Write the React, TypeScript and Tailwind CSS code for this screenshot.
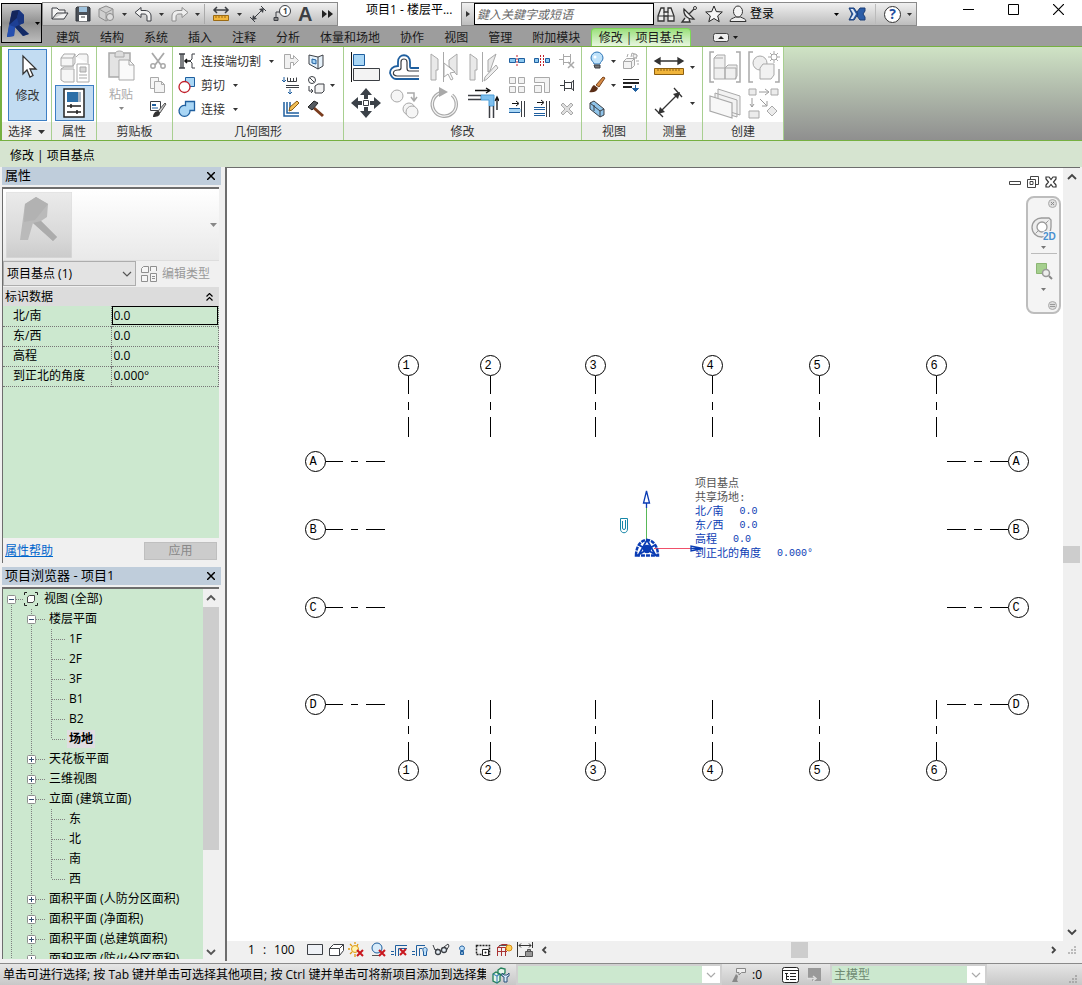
import { type ReactNode } from "react";
import clsx from "clsx";

const G = "#a9a9a9"; // disabled strokes
const D = "#3c3f44"; // dark strokes
const B = "#1f5f9f"; // blue strokes
const L = "#a9d6f5"; // light blue fills

const small: Record<string, ReactNode> = {
  open: <><path d="M3 15V4h5l2 2h6v3M3 15h12l4-6H8z" fill="#f4f4f4" stroke={D} /></>,
  save: <><path d="M4 3h12l1 1v13H3V4z" fill="#4b5058" stroke="#33373d" /><path d="M6 3h8v5H6z" fill="#9fc3de" /><path d="M6 11h8v6H6z" fill="#fff" /><path d="M8 13h4" stroke={D} /></>,
  sync: <><path d="m10 2 7 3v8l-7 4-7-4V5z" fill="#cfcfcf" stroke="#8b8b8b" /><path d="m3 5 7 4 7-4M10 9v8" fill="none" stroke="#999" /><circle cx="14" cy="13" r="3.500" fill="#ddd" stroke="#888" /></>,
  undo: <path d="M2 8.500l6-5v3h4c4 0 6 3 6 5.500V17h-4v-4c0-2-1-3-3-3H8v3.500z" fill="#f2f2f2" stroke={D} />,
  redo: <path d="M18 8.500l-6-5v3H8c-4 0-6 3-6 5.500V17h4v-4c0-2 1-3 3-3h3v3.500z" fill="#eee" stroke="#8e8e8e" />,
  measure: <><path d="M3 6h14M6 3 3 6l3 3M14 3l3 3-3 3" fill="none" stroke={D} strokeWidth="1.500" /><path d="M2.500 11.500h15v5h-15z" fill="#f2b63c" stroke="#9b6a13" /><path d="M5 12v2m3-2v2m3-2v2m3-2v2" stroke="#9b6a13" /></>,
  dim: <><path d="m5 15 10-10M2 13l5 5M13 2l5 5" fill="none" stroke={D} /><path d="m4 16 1-5 4 4zM16 4l-1 5-4-4z" fill={D} /></>,
  tag: <><circle cx="13" cy="7" r="5.500" fill="#fff" stroke={D} /><path d="M8 8H4v6" fill="none" stroke={D} /><path d="M2 13.500h4v3H2z" fill="#888" stroke={D} /><text x="11" y="10" fontSize="8" fontWeight="700" fill={D}>1</text></>,
  more: <path d="m5 6 5 4-5 4zM11 6l5 4-5 4z" fill="#222" />,
  binoculars: <><path d="M2 12 5 4h3v4h4V4h3l3 8v5h-6v-5H8v5H2z" fill="#eee" stroke="#333" strokeWidth="1.300" /><path d="M2 12h6m4 0h6M8 8v4m4-4v4" stroke="#333" /></>,
  dish: <><path d="M4 5c-1 6 4 11 10 10zM9 10l6-6M5 14l-3 4h8l-1-3" fill="#eee" stroke="#333" strokeWidth="1.300" /><circle cx="15" cy="4" r="1.500" fill="#fff" stroke="#333" /></>,
  star: <path d="m10 2 2.300 5.600 6 .4-4.600 3.900 1.500 5.800L10 14.500l-5.200 3.200 1.500-5.800L1.700 8l6-.4z" fill="#f6f6f6" stroke="#222" />,
  user: <><path d="M2 17.500c0-3 3-3 5.500-4.500h5c2.500 1.500 5.500 1.500 5.500 4.500z" fill="#eee" stroke="#333" /><ellipse cx="10" cy="7.500" rx="4.500" ry="5.500" fill="#f4f4f4" stroke="#333" /></>,
  exchange: <><path d="M10 8l3-4h5v3l-2 3 2 3v3h-5l-3-4-1-2z" fill="#2b5da8" stroke="#1d3f77" /><path d="M2 4h5l4 6-4 6H2l3-6z" fill="#2b5da8" stroke="#1d3f77" /><path d="M3.500 5H6l3 5-3 5H3.500l3-5z" fill="#dfe8f4" /></>,
  cope: <><path d="M2 3h6M2 17h6M4 3v14M6 3v14" fill="none" stroke={D} strokeWidth="1.300" /><path d="M18 3h-3v5l-2 2 2 2v5h3" fill="none" stroke={D} /><path d="M13 10H8M10 8l-2 2 2 2" fill="none" stroke="#111" strokeWidth="1.500" /></>,
  cut: <><path d="M8.500 2.500h9v9h-9z" fill={L} stroke={B} /><circle cx="7.500" cy="12" r="5.500" fill="#fff" stroke="#c0202b" strokeWidth="1.300" /></>,
  join: <><path d="M8.500 2.500h9v9H13a5.500 5.500 0 1 1-4.500-5z" fill={L} stroke={B} strokeWidth="1.300" /></>,
  joinRoof: <path d="M3.500 3.500h6v4h3v-3l5 5-5 5v-3h-3v6h-6z" fill="#f1f1f1" stroke={G} />,
  wallJoin: <><path d="M3 4l9 2 5-2v11l-5 3-9-5z" fill="#e6f2fb" stroke={D} /><path d="M12 6v12" stroke={D} /><path d="M6 8l4 1v4l-4-1z" fill={L} stroke={B} /></>,
  beam: <><path d="M3 2v5M1 5l2 2 2-2M9 14v5M7 17l2 2 2-2" fill="none" stroke={B} /><path d="M6.500 2.500v4h9v-4M9.500 3v3m3-3v3" fill="none" stroke={D} /><path d="M5 10.500h13M5 12.500h13" fill="none" stroke={D} /></>,
  paint: <><circle cx="6" cy="5" r="3.500" fill="#fff" stroke={D} /><path d="M4 3l4 4M3 11v5h4M5 14l2 2-2 2" fill="none" stroke={D} /><path d="M9 11l3-2h6v7l-2 2H9z" fill="#f3f3f3" stroke={D} /></>,
  split: <><path d="M3 3v14h15M6 3v11h12M9 3v8" fill="none" stroke={B} strokeWidth="1.500" /><path d="m8 12 1-4 7-6 2 2-7 7z" fill="#f3c056" stroke="#8a5c12" /></>,
  hammer: <><path d="M8 9l9 8" stroke="#7a3c1e" strokeWidth="3" /><path d="M2 8 8 2l4 2-6 7z" fill="#555a60" stroke="#222" /></>,
  scissors: <><path d="M4 2l9 12M16 2 7 14" stroke={G} strokeWidth="1.800" /><circle cx="5" cy="15" r="2.200" fill="none" stroke={G} strokeWidth="1.500" /><circle cx="15" cy="15" r="2.200" fill="none" stroke={G} strokeWidth="1.500" /></>,
  copy: <><path d="M2.500 2.500h8v11h-8z" fill="#f6f6f6" stroke={G} /><path d="M6.500 6.500h7l3 3v8h-10z" fill="#f3f3f3" stroke={G} /><path d="M13.500 6.500v3h3" fill="none" stroke={G} /></>,
  match: <><path d="M2.500 2.500h10v9h-10z" fill="#fff" stroke={D} /><path d="M4 5h4v2H4z" fill={B} /><path d="M4 9h6" stroke={B} /><path d="m10 12 7-8 1 1-6 9z" fill="#ccc" stroke="#555" /><path d="M5 18c0-3 2-6 5-6l2 2c0 3-3 4-7 4z" fill="#333" /></>,
  splitEl: <><path d="M2.500 7.500h6v4h-6zM11.500 7.500h6v4h-6z" fill="#8cc8f0" stroke={B} /><path d="M10 4v12" stroke="#c0202b" strokeDasharray="2 1" /></>,
  splitGap: <><path d="M2.500 7.500h4v4h-4zM13.500 7.500h4v4h-4z" fill="#8cc8f0" stroke={B} /><path d="M8.500 4v12M11.500 4v12" stroke="#c0202b" strokeDasharray="2 1" /></>,
  unpin: <><path d="M2 8.500h4M6.500 3v11M6.500 5.500h7v6h-7M13.500 3v7" fill="none" stroke={G} /><path d="m11 11 6 6m0-6-6 6" stroke={G} strokeWidth="1.500" /></>,
  array: <path d="M2.500 2.500h6v6h-6zM11.500 2.500h6v6h-6zM2.500 11.500h6v6h-6zM11.500 11.500h6v6h-6z" fill="#f3f3f3" stroke={G} />,
  scale: <><path d="M2.500 2.500h15v15h-5v-10h-10z" fill="#f3f3f3" stroke={G} /><path d="M2.500 10.500h7v7h-7z" fill="#f3f3f3" stroke={G} /></>,
  pin: <path d="M3 10.500h4M7.500 5v11M7.500 7.500h7v6h-7M16.500 5v11M14 7.500l2-1M14 13.500l2 1" fill="none" stroke={D} />,
  trim1: <><path d="M5 4.500h6M9 2l3 2.500L9 7" fill="none" stroke="#111" /><path d="M2 10h12v3H2z" fill={L} /><path d="M2 9.500h11M2 13.500h11" stroke={B} /><path d="M14.500 2v16M17.500 2v16" stroke={D} /></>,
  trim2: <><path d="M5 3.500h6M9 1l3 2.500L9 6" fill="none" stroke="#111" /><path d="M2 8.500h11M2 10.500h11M2 14.500h11M2 16.500h11" stroke={B} /><path d="M14.500 2v16M17.500 2v16" stroke={D} /></>,
  del: <path d="m4 6 2-2 4 4 4-4 2 2-4 4 4 4-2 2-4-4-4 4-2-2 4-4z" fill="#dedede" stroke={G} />,
  bulb: <><path d="M7 13c0-2-3-3-3-6a6 6 0 0 1 12 0c0 3-3 4-3 6z" fill="#bfe2fa" stroke="#2d74b5" /><path d="M7 14h6v3H8z" fill="#777" stroke={D} /><circle cx="8" cy="6" r="1.500" fill="#fff" /></>,
  explode: <><path d="M2.500 10.500l3-3h8v7l-3 3h-8zM13.500 7.500l-3 3h-8M10.500 10.500v7" fill="#f3f3f3" stroke={G} /><path d="M10 6l1-4 5 2-1 4M6 6l1-3M15 10h3M16 13h2" fill="none" stroke={G} /><circle cx="14" cy="5" r="2" fill="#eee" stroke={G} /></>,
  brush: <><path d="m9 10 7-8 2 1-6 9z" fill="#d88b45" stroke="#7a441b" /><path d="M2 17c2-1 2-5 5-7l4 3c-1 4-5 5-9 4z" fill="#5a2d16" /></>,
  linework: <><path d="M2 4.500h16" stroke="#222" /><path d="M2 8h16M2 12h9" stroke="#222" strokeWidth="2" /><path d="M14.500 10v5M11.500 13.500l3 3 3-3z" fill={B} stroke={B} /></>,
  box3d: <><path d="M3 4l4-2 10 8v6l-4 2L3 10z" fill="#8fc4ea" stroke={D} /><path d="M3 4l10 8 4-2M13 12v6M7 6v6" fill="none" stroke={D} /></>,
};

const big: Record<string, ReactNode> = {
  cursor: <path d="M11 6v18l4-4 3 7 3-1.500-3-6.500h6z" fill="#fff" stroke="#333" strokeWidth="1.300" />,
  typeProps: <><path d="M3 7l3-4h11v9l-2 3H3zM3 18h13v13H6l-3-2zM18 6l3-3h8l1 2v7M3 7h12v8M15 7l2-4M3 18l3-2h10" fill="#f6f6f6" stroke={G} /><path d="M19 13h12v18H19z" fill="#fff" stroke={G} /><path d="M22 16h6v5h-6z" fill="#d6d6d6" stroke={G} /><path d="M21 24h8m-8 3h8" stroke={G} /></>,
  props: <><path d="M6 2h20v28H6z" fill="#fff" stroke="#222" strokeWidth="1.500" /><path d="M9 5h11v10H9z" fill="#2c6fa8" /><path d="M20 5h3v10h-3z" fill="#a3b3c2" /><path d="M9 19h14M9 25h14M13 17v4M19 23v4" stroke="#222" strokeWidth="1.500" /></>,
  paste: <><path d="M4 4h21v24H4z" fill="#e3e3e3" stroke={G} strokeWidth="1.500" /><path d="M10 5c0-4 9-4 9 0v3h-9z" fill="#ddd" stroke={G} /><path d="M14 11h10l5 5v15H14z" fill="#fafafa" stroke={G} /><path d="M24 11v5h5" fill="none" stroke={G} /></>,
  align: <><path d="M1.500 1v30" stroke="#111" /><path d="M3.500 3.500h11v11h-11z" fill={L} stroke={B} /><path d="M3.500 17.500h26v12h-26z" fill="#f3f3f3" stroke={D} /></>,
  offset: <><path d="M30 17h-8c-1 0-1-1-1-2v-4c0-9-12-9-12 0v4C3 15 1 19 1 22c1 3 3 6 6 6h23" fill="none" stroke={B} strokeWidth="1.800" /><path d="M30 20H20c-2 0-2-1-2-3v-6c0-4-6-4-6 0v6c0 2-1 2-3 2-6 0-6 6-1 6h22" fill="none" stroke={D} strokeWidth="1.200" /></>,
  mirrorPick: <><path d="M3 3l7 5v11H8v10H3zM29 3l-8 6v6l8 9z" fill="#e9e9e9" stroke={G} /><path d="M15.500 1v30" stroke={G} /><path d="M16 12v14l4-3 3 6 2-1-3-6 5-1z" fill="#fff" stroke={G} /></>,
  mirrorDraw: <><path d="M3 3l7 5v11H8v10H3zM29 3l-8 6v12l2-1z" fill="#e9e9e9" stroke={G} /><path d="M15.500 1v30" stroke={G} /><path d="m17 30 1-4 11-12 2 3-11 11z" fill="#eee" stroke={G} /></>,
  move: <><path d="m16 1 6 7h-4v4h-4V8h-4zM16 31l-6-7h4v-4h4v4h4zM1 16l7-6v4h4v4H8v4zM31 16l-7 6v-4h-4v-4h4v-4z" fill="#3b4148" /><path d="M13.500 13.500h5v5h-5z" fill="#fff" stroke={D} /></>,
  copyBig: <><circle cx="8" cy="9" r="6" fill="#f5f5f5" stroke={G} /><circle cx="20" cy="22" r="6" fill="#f5f5f5" stroke={G} /><circle cx="23" cy="25" r="6" fill="#f5f5f5" stroke={G} /><path d="M18 6h7v7M22 10l3 4 3-4" fill="none" stroke={G} strokeWidth="1.500" /></>,
  rotate: <><path d="M12 6a12 12 0 1 0 12 2" fill="none" stroke={G} strokeWidth="3.500" /><path d="M12 6a12 12 0 1 0 12 2" fill="none" stroke="#f5f5f5" strokeWidth="1.200" /><path d="M11 0v10l9-5z" fill={G} /></>,
  trim: <><path d="M8 3.500h14M19 1l4 2.500L19 6M30 23V11M28 14l2-4 2 4" fill="none" stroke="#111" strokeWidth="1.300" /><path d="M14 8h13v11h-5v-6h-8z" fill="#7fc0ee" stroke="#4a9bd6" /><path d="M1 8.500h13M1 12.500h13M22.500 19v12M26.500 19v12" stroke={D} strokeWidth="1.500" /></>,
  ruler: <><path d="M3 10h26M7 7l-5 3 5 3zM25 7l5 3-5 3z" fill="#333" stroke="#333" strokeWidth="1.300" /><path d="M1.500 17.500h29v6h-29z" fill="#f0b43a" stroke="#8c5e10" /><path d="M5 18v2m3-2v2m3-2v2m3-2v2m3-2v2m3-2v2m3-2v2m3-2v2" stroke="#8c5e10" /></>,
  dimBig: <><path d="m6 26 20-20M2 22l8 8M21 1l8 9" stroke="#333" strokeWidth="1.300" /><path d="m5 27 2-7 5 5zM27 5l-2 7-5-5z" fill="#333" /></>,
  group: <><path d="M5 1H1v30h4M27 1h4v30h-4" fill="none" stroke={G} strokeWidth="1.500" /><path d="M5 17h11v11H5zM16 17h11v11H16zM5 17V7l3-3h8v13M16 17l3-3h9v11l-2 3M5 7h9" fill="#efefef" stroke={G} /></>,
  similar: <><path d="M5 1H1v30h4M27 31h4V18" fill="none" stroke={G} strokeWidth="1.500" /><circle cx="12" cy="12" r="7" fill="#efefef" stroke={G} /><path d="M12 17l3-4h11v11l-3 4H12z" fill="#f2f2f2" stroke={G} /><circle cx="26" cy="6" r="3" fill="#fff" stroke={G} /><path d="M26 0v3m0 6v3M20 6h3m6 0h3M22 2l2 2m4 4 2 2m0-8-2 2m-4 4-2 2" stroke={G} /></>,
  parts: <><path d="M9 2l22 7v19l-22-7zM6 6l22 7v17L6 23z" fill="#f2f2f2" stroke={G} /><path d="M1 9l22 7v15L1 24z" fill="#f7f7f7" stroke={G} strokeWidth="1.200" /></>,
  assembly: <><path d="M1 2h7v6H1zM23 2h7v6h-7zM1 24h10v7H1zM24 19l5 5-5 5-5-5z" fill="#ececec" stroke={G} /><path d="M11 5h9M17 2l4 3-4 3M4 11v9M2 17l2 3 2-3M12 12l7 7M19 14v5h-5" fill="none" stroke="#9a9a9a" /></>,
};

// 18px icons of the view control bar
const view: Record<string, ReactNode> = {
  detail: <path d="M1.500 3.500h15v10h-15z" fill="#eef1f6" stroke={D} />,
  style: <path d="M2.500 7.500l4-4h10v6l-4 5h-10zM16.500 3.500l-4 4h-10M12.500 7.500v7" fill="#fff" stroke={D} />,
  sun: <><circle cx="7" cy="8" r="3.500" fill="#fff3b0" stroke="#e09a10" /><path d="M7 1v2m0 10v3M0 8h2M2 3l2 2m6-2-1 2M2 13l2-2" stroke="#e09a10" strokeWidth="1.300" /><path d="m9 9 6 6m0-6-6 6" stroke="#c8171e" strokeWidth="2" /></>,
  shadow: <><circle cx="8" cy="7" r="5" fill="#d8ecfa" stroke={B} /><path d="M3 14.500h7" stroke="#555" /><path d="m10 9 6 6m0-6-6 6" stroke="#c8171e" strokeWidth="2" /></>,
  crop: <><path d="M5.500 15V4.500H17M8.500 15V7.500H17M1 10.500h3M1 13.500h3" fill="none" stroke={B} /><path d="m10 8 6 6m0-6-6 6" stroke="#c8171e" strokeWidth="2" /></>,
  cropShow: <><path d="M5.500 15V4.500H14M8.500 15V7.500h3M1 10.500h3M1 13.500h3" fill="none" stroke={B} /><path d="M12.500 11c-3-6 6-6 3 0v3.500h-3z" fill="#bfe0fa" stroke={B} /></>,
  glasses: <><path d="M1 4l2 5 3-1M12 6l4-3 1 2-3 5" fill="none" stroke={D} /><circle cx="6" cy="11" r="2.500" fill="#e5eef6" stroke={D} strokeWidth="1.300" /><circle cx="12" cy="9" r="2.500" fill="#e5eef6" stroke={D} strokeWidth="1.300" /></>,
  reveal: <><path d="M7.500 9.500c-4-6 7-6 3 0z" fill="#bfe0fa" stroke={B} /><path d="M7.500 10.500h3v3h-3z" fill="#7fa8cc" stroke={B} /></>,
  temp: <><path d="M2.500 4.500h13v9h-13z" fill="none" stroke="#222" strokeWidth="1.500" strokeDasharray="2 1" /><path d="M8.500 8.500h6v6h-6z" fill="#fff" stroke="#222" /><circle cx="11.500" cy="11.500" r="1" fill="#222" /></>,
  analytic: <><path d="M2.500 15V6.500l4-3h6M6.500 15V7M2 10.500h10M10.500 15V6M2 6.500h8" fill="none" stroke="#a33" /><path d="M4 4.500h8v3" fill="none" stroke="#555" /><circle cx="14" cy="7" r="3" fill="#ffd257" stroke="#d98b12" /></>,
  constraint: <><path d="M1.500 1v15M16.500 1v6M3 4.500h12M5 2.500l-2 2 2 2m8-4 2 2-2 2M3 15.500h6" fill="none" stroke="#333" /><path d="M9.500 10.500h7v5h-7zM11.500 10.500v-2h3v2" fill="#999" stroke="#555" /></>,
};

function Icon({ set, name, size }: { set: Record<string, ReactNode>; name: string; size: number }) {
  return (
    <svg width={size} height={size} viewBox={`0 0 ${size} ${size}`} className="shrink-0" aria-hidden="true">
      {set[name]}
    </svg>
  );
}

const Small = ({ name }: { name: string }) => <Icon set={small} name={name} size={20} />;

function Caret({ className }: { className?: string }) {
  return (
    <svg width="5" height="3" viewBox="0 0 5 3" className={clsx("shrink-0", className)} aria-hidden="true">
      <path d="M0 0h5L2.500 3z" fill="currentColor" />
    </svg>
  );
}

function Chevron({ dir, thin, className }: { dir: "up" | "down" | "left" | "right"; thin?: boolean; className?: string }) {
  const d = {
    up: "M1 7l4-4 4 4",
    down: "M1 3l4 4 4-4",
    left: "M7 2L4 5l3 3",
    right: "M3 2l3 3-3 3",
  }[dir];
  return (
    <svg width="10" height="10" viewBox="0 0 10 10" className={clsx("shrink-0", className)} aria-hidden="true">
      <path d={d} fill="none" stroke="currentColor" strokeWidth={thin ? 1.2 : 1.8} />
    </svg>
  );
}

function BarButton({ name, width = "w-6" }: { name: string; width?: string }) {
  return (
    <button aria-label={name} className={clsx("flex h-full items-center justify-center", width)}>
      <Small name={name} />
    </button>
  );
}

function TitleBar() {
  return (
    <div className="flex h-[26px] items-start">
      <div className="flex h-6 w-[296px] items-center self-end border border-[#8a8a8a] bg-linear-to-b from-[#f0f0f0] to-[#bdbdbd] pl-1 text-[#333]">
        <BarButton name="open" />
        <BarButton name="save" />
        <BarButton name="sync" />
        <Caret className="mx-1" />
        <BarButton name="undo" />
        <Caret className="mx-1" />
        <BarButton name="redo" />
        <Caret className="mx-1" />
        <span className="mr-1 h-5 w-px bg-[#aaa]" />
        <BarButton name="measure" />
        <Caret className="mx-1" />
        <BarButton name="dim" />
        <BarButton name="tag" />
        <button className="w-6 font-['Liberation_Sans'] text-xl font-bold leading-5 text-[#3c3f44]">A</button>
        <BarButton name="more" width="w-5" />
      </div>
      <h1 className="w-[123px] shrink-0 pl-7 text-xs leading-5">项目1 - 楼层平...</h1>
      <div className="flex h-6 w-[456px] items-center self-end border border-[#8a8a8a] bg-linear-to-b from-[#f0f0f0] to-[#bdbdbd] text-[#333]">
        <button aria-label="收拢" className="flex w-3 justify-center">
          <svg width="4" height="6" viewBox="0 0 4 6"><path d="M0 0l4 3-4 3z" fill="#333" /></svg>
        </button>
        <input
          aria-label="搜索"
          placeholder="鍵入关鍵字或短语"
          className="h-[22px] w-[180px] border border-black bg-white px-0.5 text-xs italic outline-none placeholder:text-[#666]"
        />
        <BarButton name="binoculars" />
        <BarButton name="dish" />
        <BarButton name="star" />
        <BarButton name="user" />
        <button className="flex flex-1 items-center justify-between text-xs text-black">
          登录 <Caret />
        </button>
        <BarButton name="exchange" width="w-9" />
        <span className="h-5 w-px bg-[#bbb]" />
        <button aria-label="帮助" className="ml-2 flex h-[17px] w-[17px] items-center justify-center rounded-full border border-[#333] bg-white text-sm font-bold leading-4 text-[#1f4f9f]">
          ?
        </button>
        <Caret className="ml-1.5 mr-1" />
      </div>
      <div className="flex flex-1 items-center justify-end gap-[34px] pr-[18px] pt-1">
        <button aria-label="最小化"><svg width="11" height="11"><path d="M0 5.500h11" stroke="#000" /></svg></button>
        <button aria-label="最大化"><svg width="11" height="11"><path d="M.5.5h10v10H.5z" fill="none" stroke="#000" /></svg></button>
        <button aria-label="关闭"><svg width="11" height="11"><path d="m0 0 11 11M11 0 0 11" stroke="#000" strokeWidth="1.200" /></svg></button>
      </div>
    </div>
  );
}

const tabs = ["建筑", "结构", "系统", "插入", "注释", "分析", "体量和场地", "协作", "视图", "管理", "附加模块"];

function Header() {
  return (
    <header className="flex bg-[linear-gradient(#fff_26px,#9d9d9d_26px)]">
      <button
        aria-label="应用程序菜单"
        className="ml-px mt-[3px] flex h-10 w-[41px] shrink-0 items-center border border-black bg-linear-to-b from-[#c9c9c9] via-[#8f8f8f] to-[#bcbcbc] pl-1"
      >
        <svg width="25" height="29" viewBox="0 0 25 29">
          <path d="M6 2l7-1 5 5v8l-5 2 10 9-6 2-8-9-1 9-7 1z" fill="#1d3f94" />
          <path d="M6 2l7-1-2 8-8 7z" fill="#14265c" />
          <path d="M13 1l5 5v8l-5 2-2-7z" fill="#1a3680" />
          <path d="M9 18l4-2 10 9-6 2z" fill="#132a66" />
          <path d="M3 16l6 2-1 9-7 1z" fill="#2650b0" />
        </svg>
        <Caret className="ml-1" />
      </button>
      <div className="min-w-0 flex-1">
        <TitleBar />
        <nav className="flex h-5 items-end gap-5 pl-[14px] text-xs leading-[17px] text-[#1a1a1a]">
          {tabs.map((t) => (
            <button key={t} className="shrink-0">{t}</button>
          ))}
          <button className="-ml-[9px] h-[18px] w-[100px] shrink-0 rounded-t-sm border border-b-0 border-[#7ed957] bg-linear-to-b from-[#9be07b] to-[#e8f5e0]">
            修改 | 项目基点
          </button>
          <button aria-label="最小化功能区" className="ml-0.5 flex items-center gap-1 pb-1">
            <svg width="16" height="9" viewBox="0 0 16 9">
              <rect x=".5" y=".5" width="15" height="8" rx="2" fill="#eee" stroke="#444" />
              <path d="M8 3l3 3H5z" fill="#222" />
            </svg>
            <Caret />
          </button>
        </nav>
      </div>
    </header>
  );
}

interface PanelProps {
  label: string;
  width: string;
  caret?: boolean;
  children: ReactNode;
}

function Panel({ label, width, caret, children }: PanelProps) {
  return (
    <section className={clsx("flex shrink-0 flex-col border-r border-[#a8cf90] bg-white", width)}>
      <div className="flex h-[75px] pt-0.5">{children}</div>
      <div className="flex flex-1 items-center justify-center gap-1.5 bg-[#eee] pt-px text-xs leading-4">
        {label}
        {caret && (
          <svg width="7" height="4" viewBox="0 0 7 4"><path d="M0 0h7L3.500 4z" fill="#333" /></svg>
        )}
      </div>
    </section>
  );
}

// Column of large buttons
function BigCol({ names, width = "w-[39px]" }: { names: string[]; width?: string }) {
  return (
    <div className={clsx("flex flex-col", width)}>
      {names.map((n) => (
        <button key={n} aria-label={n} className="flex h-9 items-center justify-center">
          <Icon set={big} name={n} size={32} />
        </button>
      ))}
    </div>
  );
}

// Column of three small buttons
function SmallCol({ names, width = "w-[25px]", className }: { names: string[]; width?: string; className?: string }) {
  return (
    <div className={clsx("flex flex-col", width, className)}>
      {names.map((n) => (
        <button key={n} aria-label={n} className="flex h-6 items-center justify-center">
          <Small name={n} />
        </button>
      ))}
    </div>
  );
}

function Ribbon() {
  return (
    <div className="flex h-[95px] border-y border-l-2 border-[#76b041] bg-linear-to-b from-[#cfe3c5] to-[#8f8f8f] text-[#333]">
      <Panel label="选择" width="w-[50px]" caret>
        <button className="ml-1.5 flex h-[72px] w-[39px] flex-col items-center border border-[#3d7fc4] bg-[#c2dcf2] text-xs">
          <Icon set={big} name="cursor" size={32} />
          <span className="mt-1.5">修改</span>
        </button>
      </Panel>
      <Panel label="属性" width="w-[45px]">
        <div className="flex w-full flex-col items-center">
          <button aria-label="类型属性" className="flex h-9 items-center">
            <Icon set={big} name="typeProps" size={32} />
          </button>
          <button aria-label="属性" className="flex h-9 w-[39px] items-center justify-center border border-[#3d7fc4] bg-[#c2dcf2]">
            <Icon set={big} name="props" size={32} />
          </button>
        </div>
      </Panel>
      <Panel label="剪贴板" width="w-[76px]">
        <button className="ml-2 flex w-8 flex-col items-center text-xs text-[#aaa]">
          <Icon set={big} name="paste" size={32} />
          <span className="mt-1.5">粘贴</span>
          <Caret className="mt-1 text-[#888]" />
        </button>
        <SmallCol names={["scissors", "copy", "match"]} className="ml-2" />
      </Panel>
      <Panel label="几何图形" width="w-[171px]">
        <div className="ml-1 w-[101px]">
          {[
            ["cope", "连接端切割"],
            ["cut", "剪切"],
            ["join", "连接"],
          ].map(([icon, text]) => (
            <button key={icon} className="flex h-6 items-center text-xs">
              <Small name={icon} />
              <span className="ml-1 mr-2 pt-0.5">{text}</span>
              <Caret />
            </button>
          ))}
        </div>
        <SmallCol names={["joinRoof", "beam", "split"]} />
        <SmallCol names={["wallJoin", "paint", "hammer"]} />
        <Caret className="ml-0.5 mt-[35px]" />
      </Panel>
      <Panel label="修改" width="w-[238px]">
        <BigCol names={["align", "move"]} width="ml-0.5 w-[39px]" />
        <BigCol names={["offset", "copyBig"]} />
        <BigCol names={["mirrorPick", "rotate"]} />
        <BigCol names={["mirrorDraw", "trim"]} />
        <SmallCol names={["splitEl", "array", "trim1"]} className="ml-0.5" />
        <SmallCol names={["splitGap", "scale", "trim2"]} />
        <SmallCol names={["unpin", "pin", "del"]} />
      </Panel>
      <Panel label="视图" width="w-[65px]">
        <SmallCol names={["bulb", "brush", "box3d"]} className="ml-0.5" />
        <div className="flex flex-col gap-[21px] pl-0.5 pt-[11px]">
          <Caret />
          <Caret />
        </div>
        <SmallCol names={["explode", "linework"]} className="ml-0.5" />
      </Panel>
      <Panel label="测量" width="w-[56px]">
        <BigCol names={["ruler", "dimBig"]} width="ml-0.5 w-[39px]" />
        <div className="flex flex-col gap-[33px] pl-0.5 pt-[17px]">
          <Caret />
          <Caret />
        </div>
      </Panel>
      <Panel label="创建" width="w-[81px]">
        <BigCol names={["group", "parts"]} width="ml-0.5 w-[39px]" />
        <BigCol names={["similar", "assembly"]} />
      </Panel>
    </div>
  );
}

function PaletteTitle({ children }: { children: ReactNode }) {
  return (
    <div className="flex h-[18px] shrink-0 items-center justify-between bg-[#bfcddb] pl-[3px] pr-1.5 text-[13px]">
      <h2>{children}</h2>
      <button aria-label="关闭">
        <svg width="8" height="8" viewBox="0 0 8 8"><path d="m0 0 8 8M8 0 0 8" stroke="#000" strokeWidth="1.500" /></svg>
      </button>
    </div>
  );
}

const rows = [
  { id: "north", label: "北/南", value: "0.0" },
  { id: "east", label: "东/西", value: "0.0" },
  { id: "elev", label: "高程", value: "0.0" },
  { id: "angle", label: "到正北的角度", value: "0.000°" },
];

function Properties() {
  return (
    <section className="flex h-[400px] shrink-0 flex-col">
      <PaletteTitle>属性</PaletteTitle>
      <div className="mb-1 mr-0.5 mt-0.5 flex flex-1 flex-col border-l border-t-2 border-[#6d6d6d]">
        <button aria-label="类型选择器" className="flex h-[71px] items-center justify-between bg-linear-to-b from-white to-[#e9e9e9] pl-[3px] pr-0.5 text-[#888]">
          <svg width="66" height="66" viewBox="0 0 66 66">
            <defs>
              <linearGradient id="thumb" x1="0" y1="0" x2="0" y2="1">
                <stop offset="0" stopColor="#ebebeb" />
                <stop offset="0.7" stopColor="#d8d8d8" />
                <stop offset="1" stopColor="#cbcbcb" />
              </linearGradient>
            </defs>
            <path d="M0 0h66v66H0z" fill="url(#thumb)" stroke="#ddd" />
            <path d="M19 12l11-7 12 7-1 13-6 4 16 16-4 4-20-18-5 17h-8z" fill="#bababa" />
            <path d="M19 12l11-7 12 7-13 16-11 2z" fill="#b2b2b2" />
            <path d="M27 31l8-2 16 16-4 4z" fill="#acacac" />
          </svg>
          <svg width="7" height="4" viewBox="0 0 7 4"><path d="M0 0h7L3.500 4z" fill="currentColor" /></svg>
        </button>
        <div className="flex h-[27px] items-center border-t border-[#ddd] pb-px">
          <div className="relative w-[133px]">
            <select aria-label="图元筛选" className="block h-[25px] w-full appearance-none border border-[#adadad] bg-[#e3e3e3] pl-[3px] text-xs outline-none">
              <option>项目基点 (1)</option>
            </select>
            <Chevron dir="down" thin className="pointer-events-none absolute right-1 top-2 text-[#555]" />
          </div>
          <button className="ml-1 flex items-center gap-1 text-xs text-[#999]">
            <svg width="18" height="18" viewBox="0 0 18 18">
              <path d="M1.500 3.500l2-2h5v6h-7zM1.500 10.500h6v6h-6zM10.500 6V1.500h6V6M10.500 8.500h6v8h-6z" fill="#f6f6f6" stroke="#8f8f8f" />
              <path d="M12 11.500h3M12 13.500h3" stroke="#8f8f8f" />
            </svg>
            编辑类型
          </button>
        </div>
        <div className="flex h-[19px] items-center justify-between bg-[#dcdcdc] pl-0.5 pr-1.5 text-xs">
          标识数据
          <svg width="7" height="8" viewBox="0 0 7 8"><path d="m.5 3.500 3-3 3 3M.5 7.500l3-3 3 3" fill="none" stroke="#000" strokeWidth="1.200" /></svg>
        </div>
        <div className="flex-1 bg-[#cce8cf]">
          <table className="w-full table-fixed border-collapse text-xs">
            <tbody>
              {rows.map((r, i) => (
                <tr key={r.id} className="h-5 border-b border-dotted border-[#777]">
                  <th className="w-[108px] border-r border-dotted border-[#777] p-0 pl-2.5 text-left font-normal">
                    <label htmlFor={r.id}>{r.label}</label>
                  </th>
                  <td className="border-r border-dotted border-[#777] p-0">
                    <input
                      id={r.id}
                      defaultValue={r.value}
                      className={clsx("block h-[19px] w-full border bg-transparent px-px pb-px outline-none", i === 0 ? "border-black" : "border-transparent")}
                    />
                  </td>
                </tr>
              ))}
            </tbody>
          </table>
        </div>
        <div className="flex h-[25px] items-center justify-between pl-0.5 pr-0.5 text-xs">
          <a href="#help" className="text-[#0066cc] underline">属性帮助</a>
          <button className="h-[18px] w-[73px] border border-[#bfbfbf] bg-[#ccc] leading-4 text-[#888]">应用</button>
        </div>
      </div>
    </section>
  );
}

interface Node {
  text: string;
  depth: number;
  open?: boolean;
  leaf?: boolean;
  last?: boolean;
  active?: boolean;
}

const tree: Node[] = [
  { text: "视图 (全部)", depth: 0, open: true },
  { text: "楼层平面", depth: 1, open: true },
  { text: "1F", depth: 2, leaf: true },
  { text: "2F", depth: 2, leaf: true },
  { text: "3F", depth: 2, leaf: true },
  { text: "B1", depth: 2, leaf: true },
  { text: "B2", depth: 2, leaf: true },
  { text: "场地", depth: 2, leaf: true, last: true, active: true },
  { text: "天花板平面", depth: 1 },
  { text: "三维视图", depth: 1 },
  { text: "立面 (建筑立面)", depth: 1, open: true },
  { text: "东", depth: 2, leaf: true },
  { text: "北", depth: 2, leaf: true },
  { text: "南", depth: 2, leaf: true },
  { text: "西", depth: 2, leaf: true, last: true },
  { text: "面积平面 (人防分区面积)", depth: 1 },
  { text: "面积平面 (净面积)", depth: 1 },
  { text: "面积平面 (总建筑面积)", depth: 1 },
  { text: "面积平面 (防火分区面积)", depth: 1 },
];

function TreeRow({ node }: { node: Node }) {
  const x = 8.5 + node.depth * 20;
  const dots = { stroke: "#808080", strokeDasharray: "1 1" };
  const w = node.depth * 20 + (node.depth ? 24 : 21);
  return (
    <li className="flex h-5 items-center text-xs">
      <svg width={w} height="20" className="shrink-0" aria-hidden="true">
        {Array.from({ length: node.depth }, (_, i) => (
          <path key={i} d={`M${8.5 + i * 20} 0v20`} {...dots} />
        ))}
        {node.depth > 0 && <path d={`M${x} 0v${node.last ? 10 : 20}`} {...dots} />}
        {node.depth === 0 && <path d="M8.500 10v10" {...dots} />}
        <path d={`M${x + 0.5} 10.500h14`} {...dots} />
        {!node.leaf && (
          <>
            <rect x={x - 4} y="6.500" width="8" height="8" rx="1" fill="#fff" stroke="#8f8f8f" />
            <path d={`M${x - 2.5} 10.500h5`} stroke="#33506f" />
            {!node.open && <path d={`M${x} 8v5`} stroke="#33506f" />}
          </>
        )}
      </svg>
      {node.depth === 0 && (
        <svg width="14" height="14" viewBox="0 0 14 14" className="mr-1.5 shrink-0" aria-hidden="true">
          <path d="M3 .5H.5V3M11 .5h2.500V3M3 13.500H.5V11M11 13.500h2.500V11" fill="none" stroke="#222" />
          <path d="M3.500 5l2-1.500h5v5L9 10.500H3.500z" fill="#fff" stroke="#444" />
        </svg>
      )}
      <button
        className={clsx(
          "whitespace-nowrap leading-[18px]",
          node.depth > 0 && "px-0.5",
          node.active && "bg-[#dfdde0] font-bold",
        )}
      >
        {node.text}
      </button>
    </li>
  );
}

function Browser() {
  return (
    <section className="flex min-h-0 flex-1 flex-col">
      <PaletteTitle>项目浏览器 - 项目1</PaletteTitle>
      <div className="mr-0.5 mt-0.5 flex min-h-0 flex-1 border-l border-t-2 border-[#6d6d6d]">
        <ul className="min-w-0 flex-1 overflow-hidden bg-[#cce8cf]">
          {tree.map((n) => (
            <TreeRow key={n.text} node={n} />
          ))}
        </ul>
        <div className="flex w-4 flex-col items-center bg-[#f0f0f0] text-[#555]">
          <Chevron dir="up" className="my-1" />
          <div className="h-[243px] w-full bg-[#cdcdcd]" />
          <Chevron dir="down" className="mb-0.5 mt-auto" />
        </div>
      </div>
    </section>
  );
}

const cols = [181, 263, 368, 485, 592, 709];
const lines = [293, 361, 439, 536];

function Bubble({ x, y, text }: { x: number; y: number; text: string }) {
  return (
    <g>
      <circle cx={x + 0.5} cy={y + 0.5} r="10" fill="#fff" stroke="#000" />
      <text x={x - 2} y={y + 4} textAnchor="middle" fontSize="12" fontFamily="'Liberation Mono',monospace">
        {text}
      </text>
    </g>
  );
}

function Plan() {
  return (
    <svg width="835" height="773" viewBox="0 0 835 773" className="absolute left-0 top-0">
      {cols.map((x, i) => (
        <g key={x}>
          <path d={`M${x + 0.5} 208v18m0 8v8m0 7v20M${x + 0.5} 532v19m0 7v8m0 8v18`} stroke="#000" />
          <Bubble x={x} y={197} text={String(i + 1)} />
          <Bubble x={x} y={602} text={String(i + 1)} />
        </g>
      ))}
      {lines.map((y, i) => (
        <g key={y}>
          <path d={`M98 ${y + 0.5}h18m8 0h7m8 0h19M720 ${y + 0.5}h19m8 0h8m8 0h18`} stroke="#000" />
          <Bubble x={88} y={y} text={"ABCD"[i]} />
          <Bubble x={791} y={y} text={"ABCD"[i]} />
        </g>
      ))}
      {/* project base point */}
      <path d="M419.500 373v-34" stroke="#58b858" />
      <path d="M427 380.500h37" stroke="#f0506a" />
      <g fill="none" stroke="#0a3cb4" strokeWidth="1.300">
        <path d="M419.500 323l-3 12h6zM419.500 335v5M464 378v5l12-2.500zM464 380.500h10" />
        <path d="M409 387.500c0-8 4-15.500 11-15.500s11 7.500 11 15.500z" strokeWidth="2.500" strokeDasharray="4 1" />
        <path d="M411 388l9-16 9 16M412 377l17 10M428 377l-17 10" strokeWidth="1.800" />
        <circle cx="420" cy="381" r="3.500" fill="#0a3cb4" />
      </g>
      <path d="M395.500 353v7a1.500 1.500 0 0 0 3 0v-8M393.500 360v-9.500h7V361c0 5-7 5-7 0z" fill="none" stroke="#1787a8" />
    </svg>
  );
}

const point = [
  ["北/南", "0.0"],
  ["东/西", "0.0"],
  ["高程", "0.0"],
  ["到正北的角度", "0.000°"],
];

function NavBar() {
  return (
    <div className="absolute right-0.5 top-7 flex h-[118px] w-[35px] flex-col items-center rounded-lg border-2 border-[#bdbdbd] bg-[#f4f4f4] text-[#777]">
      <button aria-label="关闭导航栏" className="self-end pr-0.5 pt-px">
        <svg width="9" height="9" viewBox="0 0 9 9"><circle cx="4.500" cy="4.500" r="4" fill="#ddd" stroke="#aaa" /><path d="m3 3 3 3m0-3L3 6" stroke="#888" /></svg>
      </button>
      <button aria-label="控制盘" className="mt-2">
        <svg width="26" height="26" viewBox="0 0 26 26">
          <path d="M11 2h7l2 2v7a9.500 9.500 0 1 1-9-9z" fill="#ededed" stroke="#9a9a9a" strokeWidth="1.300" />
          <circle cx="11" cy="11" r="5" fill="#fff" stroke="#9a9a9a" strokeWidth="1.300" />
          <path d="M7.500 14.500l-3 3M14.500 7.500l3-3" stroke="#9a9a9a" />
          <text x="12" y="24" fontSize="10" fontWeight="700" fontFamily="Liberation Sans" fill="#4a90cf" stroke="#f4f4f4" strokeWidth="2" paintOrder="stroke">2D</text>
        </svg>
      </button>
      <Caret className="mt-1" />
      <span className="my-1 h-px w-[26px] bg-[#bbb]" />
      <button aria-label="缩放" className="mt-1">
        <svg width="18" height="18" viewBox="0 0 18 18">
          <path d="M1.500 1.500h10v10h-10z" fill="#a5cf8e" stroke="#8bb573" />
          <circle cx="11" cy="11" r="3.500" fill="#eee" stroke="#999" strokeWidth="1.500" />
          <path d="m14 14 3 3" stroke="#888" strokeWidth="2" />
        </svg>
      </button>
      <Caret className="mt-2" />
      <button aria-label="选项" className="mb-0.5 mt-auto self-end pr-0.5">
        <svg width="9" height="9" viewBox="0 0 9 9"><circle cx="4.500" cy="4.500" r="4" fill="#ddd" stroke="#aaa" /><path d="M2 3.500h5M2 5.500h5" stroke="#999" /></svg>
      </button>
    </div>
  );
}

function Canvas() {
  return (
    <div className="relative min-w-0 flex-1 overflow-hidden bg-white">
      <Plan />
      <div className="absolute left-[468px] top-[309px] font-['Liberation_Mono','Noto_Sans_CJK_SC',monospace] text-[11px] leading-[14px] text-[#0a3cb4]">
        <p className="text-[#555]">项目基点</p>
        <p className="text-[#555]">共享场地:</p>
        {point.map(([k, v]) => (
          <p key={k} className="flex gap-4">
            <span>{k}</span>
            <span className="text-[10px]">{v}</span>
          </p>
        ))}
      </div>
      <div className="absolute right-1.5 top-2 flex items-center gap-1.5">
        <button aria-label="最小化视图"><svg width="12" height="12"><path d="M.5 5.500h11v3H.5z" fill="#fff" stroke="#444" /></svg></button>
        <button aria-label="还原视图"><svg width="12" height="12"><path d="M3.500 3V.5h8v8H9M.5 3.500h8v8h-8zM3 5.500h3v3H3z" fill="none" stroke="#444" /></svg></button>
        <button aria-label="关闭视图"><svg width="12" height="12" viewBox="0 0 12 12"><path d="M1 1h3l2 2.500L8 1h3v2L8.500 6 11 9v2H8L6 8.500 4 11H1V9l2.500-3L1 3z" fill="#fff" stroke="#333" strokeWidth="1.200" /></svg></button>
      </div>
      <NavBar />
    </div>
  );
}

function ViewControls() {
  return (
    <div className="flex h-5 items-center bg-[#f0f0f0] pb-0.5 text-[#444]">
      <button className="ml-[21px] flex w-[56px] gap-2 text-xs text-black">
        <span>1</span>
        <span>:</span>
        <span>100</span>
      </button>
      {Object.keys(view).map((n) => (
        <button key={n} aria-label={n} className="flex w-[21px] justify-center">
          <Icon set={view} name={n} size={18} />
        </button>
      ))}
      <Chevron dir="left" className="ml-1" />
      <div className="flex h-4 flex-1 justify-center">
        <div className="h-full w-[17px] bg-[#cdcdcd]" />
      </div>
      <Chevron dir="right" className="mr-1" />
      <div className="flex w-[17px] justify-center">
        <svg width="10" height="10" viewBox="0 0 10 10"><path d="M7 1h2v2H7zM4 4h2v2H4zM7 4h2v2H7zM1 7h2v2H1zM4 7h2v2H4zM7 7h2v2H7z" fill="#bbb" /></svg>
      </div>
    </div>
  );
}

function Combo({ label, value, width }: { label: string; value: string; width: string }) {
  return (
    <div className={clsx("relative h-[21px] border-2 border-[#d0d0d0] bg-white", width)}>
      <select aria-label={label} className="block h-[17px] w-[calc(100%-18px)] appearance-none bg-[#cce8cf] pl-0.5 text-xs leading-4 text-[#6f8a72] outline-none">
        <option>{value}</option>
      </select>
      <Chevron dir="down" thin className="pointer-events-none absolute right-1 top-1 text-[#aaa]" />
    </div>
  );
}

function StatusBar() {
  return (
    <footer className="flex h-[22px] shrink-0 items-center border-t border-[#8a8a8a] bg-linear-to-b from-[#e6e6e6] to-[#c8c8c8] text-xs">
      <p className="ml-[3px] w-[483px] shrink-0 overflow-hidden whitespace-nowrap">
        单击可进行选择; 按 Tab 键并单击可选择其他项目; 按 Ctrl 键并单击可将新项目添加到选择集
      </p>
      <button aria-label="工作集" className="mx-1.5">
        <svg width="18" height="18" viewBox="0 0 18 18">
          <path d="M6 4l3-2 4 1v4L10 9 6 8zM1 8l3-2 4 2v7l-3 2-4-2z" fill="#e6f5ea" stroke="#23805a" strokeWidth="1.300" />
          <path d="M1 8l4 2 3-2M5 10v7" fill="none" stroke="#2d74b5" />
          <path d="M10 7v3l2 1v5h3v-5l2-1V7l-2 2h-3z" fill="#d7ecfa" stroke="#2b4f78" />
        </svg>
      </button>
      <Combo label="活动工作集" value="" width="w-[206px]" />
      <button className="ml-1 flex items-center gap-1.5 px-1.5">
        <svg width="14" height="16" viewBox="0 0 14 16"><path d="M4.500 1.500h9v4h-4L7 8V5.500H4.500z" fill="#eee" stroke="#888" /><path d="M4 7l2 2-1 4 1 2H0l2-4z" fill="#888" /></svg>
        :0
      </button>
      <button aria-label="设计选项" className="ml-3.5">
        <svg width="17" height="16" viewBox="0 0 17 16"><rect x=".5" y=".5" width="16" height="15" rx="2" fill="#fff" stroke="#222" /><path d="M1 3.500h15M3 6.500h3M8 9.500h6M8 12.500h6M8 6.500h6M4.500 7v5.500H7M5 9.500h2" stroke="#222" fill="none" /></svg>
      </button>
      <button aria-label="添加到集" className="mx-2">
        <svg width="15" height="15" viewBox="0 0 15 15"><path d="M1 1h13v13H5v-3H1z" fill="#999" /><path d="M0 11.500h8M6 9l3 2.500L6 14" fill="none" stroke="#ddd" strokeWidth="1.500" /></svg>
      </button>
      <Combo label="设计选项集" value="主模型" width="w-[157px]" />
      <svg width="10" height="10" viewBox="0 0 10 10" className="ml-auto mr-1 mt-2"><path d="M7 1h2v2H7zM4 4h2v2H4zM7 4h2v2H7zM1 7h2v2H1zM4 7h2v2H4zM7 7h2v2H7z" fill="#aaa" /></svg>
    </footer>
  );
}

export default function App() {
  return (
    <div className="flex h-screen flex-col bg-[#f0f0f0] font-['Open_Sans','Noto_Sans_CJK_SC',sans-serif] text-black">
      <Header />
      <Ribbon />
      <div className="flex h-[26px] shrink-0 items-center bg-[#d6e4d0] pl-2.5 pt-[3px] text-xs">修改 | 项目基点</div>
      <main className="flex min-h-0 flex-1">
        <aside className="flex w-[221px] shrink-0 flex-col pb-1 pl-0.5">
          <Properties />
          <Browser />
        </aside>
        <div className="mb-0.5 ml-1 mr-0.5 flex min-w-0 flex-1 flex-col border-l-2 border-t border-[#6d6d6d]">
          <div className="flex min-h-0 flex-1">
            <Canvas />
            <div className="flex w-[17px] flex-col items-center justify-between bg-[#f0f0f0] py-1 text-[#444]">
              <Chevron dir="up" />
              <div className="h-[17px] w-full bg-[#cdcdcd]" />
              <Chevron dir="down" />
            </div>
          </div>
          <ViewControls />
        </div>
      </main>
      <StatusBar />
    </div>
  );
}
